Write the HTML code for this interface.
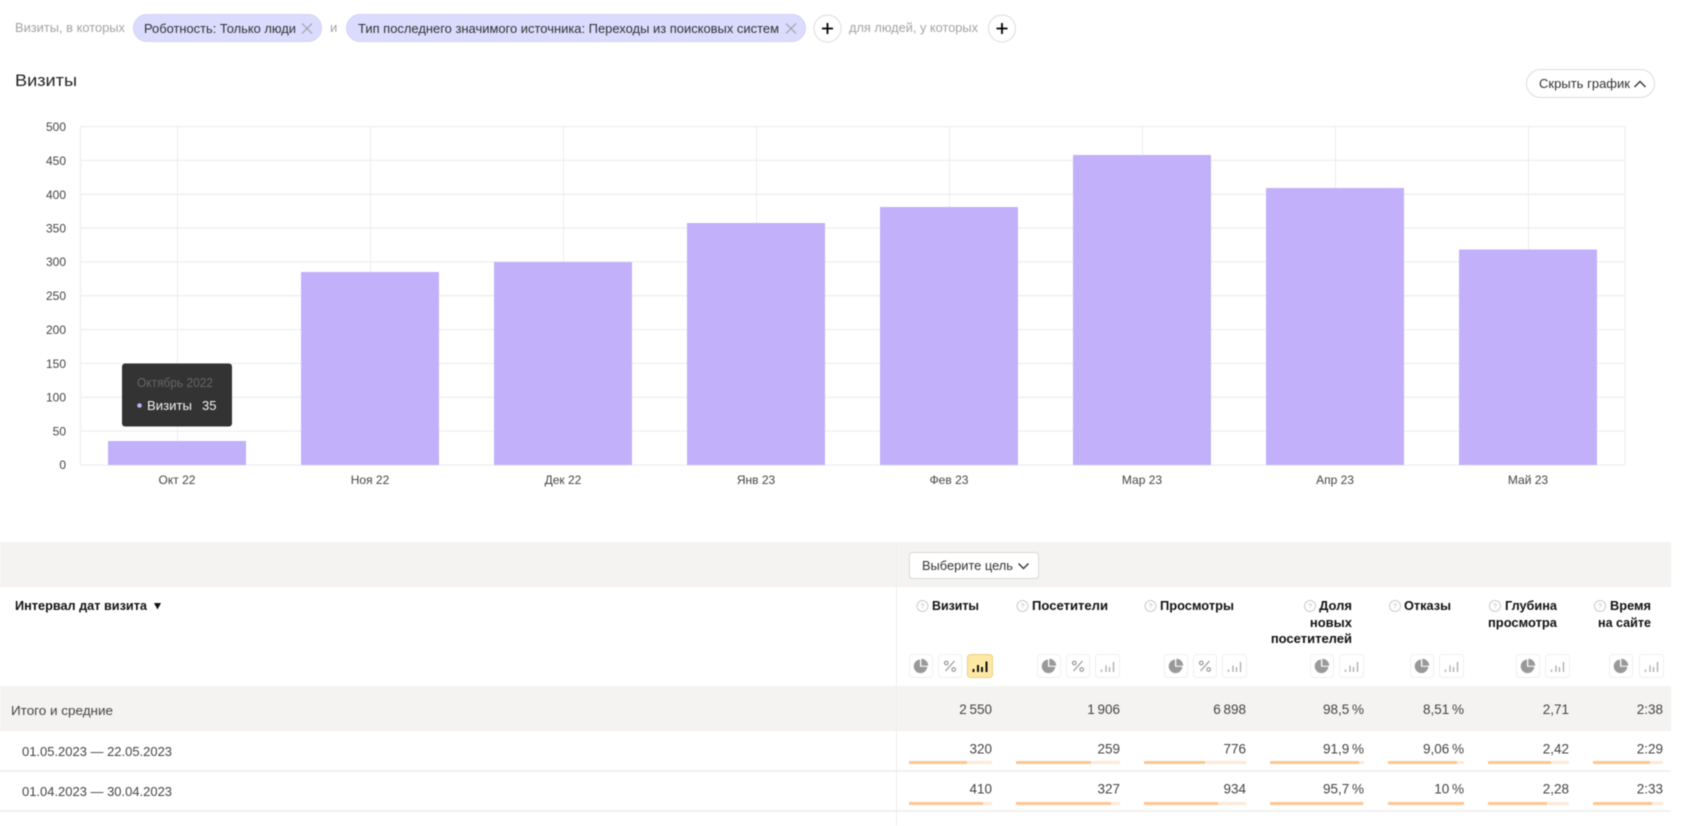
<!DOCTYPE html>
<html lang="ru">
<head>
<meta charset="utf-8">
<title>Визиты</title>
<style>
html,body{margin:0;padding:0;background:#fff;width:1696px;height:826px;overflow:hidden}
svg{display:block;filter:blur(0.4px)}
text{font-family:"Liberation Sans","Noto Sans CJK SC",sans-serif;font-size:13px;fill:#333}
.mut{fill:#a3a3a3}
.ax{font-size:12px;fill:#444}
.x{font-size:12px;fill:#444;text-anchor:middle}
.b{font-weight:bold;fill:#111}
.r{text-anchor:end}
.n{text-anchor:end;font-size:13.5px;fill:#444}
.g{stroke:#efefef;stroke-width:1.3}
.v{stroke:#ececec;stroke-width:1}
.bar{fill:#c2b0fa}
.chip{fill:#dadbfd;stroke:#d2d3f8}
.tr{fill:#fde9d8}
.fl{fill:#fdc592}
</style>
</head>
<body>
<svg width="1696" height="826" viewBox="0 0 1696 826" xmlns="http://www.w3.org/2000/svg">
<defs>
<g id="pie"><rect x="0.5" y="0.5" width="23" height="23" rx="3" fill="#fff" stroke="#f0f0f0"/><path d="M11 5.500a6.800 6.800 0 1 0 7.300 7.300h-7.300z" fill="#999"/><path d="M12.300 4.800v6.900h6.900a6.900 6.900 0 0 0-6.900-6.900z" fill="#999"/></g>
<g id="pct"><rect x="0.5" y="0.5" width="23" height="23" rx="3" fill="#fff" stroke="#f0f0f0"/><path d="M7.500 17l9-10" stroke="#999" stroke-width="1.200" fill="none"/><circle cx="8.300" cy="9" r="1.800" fill="none" stroke="#999" stroke-width="1.200"/><circle cx="15.700" cy="15.500" r="1.800" fill="none" stroke="#999" stroke-width="1.200"/></g>
<g id="bars"><rect x="0.5" y="0.5" width="24" height="23" rx="3" fill="#fff" stroke="#f0f0f0"/><path d="M6.500 15.500v2.500M11 11.500v6.500M14.500 13v5M18.500 8v10" stroke="#aaa" stroke-width="1.300" fill="none"/></g>
<g id="q"><circle cx="0" cy="0" r="5.500" fill="#fff" stroke="#ccc"/><text x="0" y="2.500" text-anchor="middle" style="font-size:7px;fill:#bbb">?</text></g>
</defs>

<!-- Filter row -->
<text class="mut" x="15" y="32" textLength="110" lengthAdjust="spacingAndGlyphs">Визиты, в которых</text>
<rect class="chip" x="133.500" y="14.500" width="188" height="27" rx="13.500"/>
<text x="144" y="33" textLength="152" lengthAdjust="spacingAndGlyphs">Роботность: Только люди</text>
<path d="M302 23.500l10 10M312 23.500l-10 10" stroke="#999" stroke-width="0.900" fill="none"/>
<text class="mut" x="330" y="32">и</text>
<rect class="chip" x="346.500" y="14.500" width="459" height="27" rx="13.500"/>
<text x="358" y="33" textLength="421" lengthAdjust="spacingAndGlyphs">Тип последнего значимого источника: Переходы из поисковых систем</text>
<path d="M786 23.500l10 10M796 23.500l-10 10" stroke="#999" stroke-width="0.900" fill="none"/>
<circle cx="827.500" cy="28.500" r="13.500" fill="#fff" stroke="#dcdcdc"/>
<path d="M827.500 23v11M822 28.500h11" stroke="#000" stroke-width="1.800"/>
<text class="mut" x="849" y="32" textLength="129" lengthAdjust="spacingAndGlyphs">для людей, у которых</text>
<circle cx="1002" cy="28.500" r="13.500" fill="#fff" stroke="#dcdcdc"/>
<path d="M1002 23v11M996.500 28.500h11" stroke="#000" stroke-width="1.800"/>

<!-- Title -->
<text x="15" y="86" style="font-size:17px;fill:#222" textLength="62" lengthAdjust="spacingAndGlyphs">Визиты</text>
<rect x="1526.500" y="69.500" width="128" height="28" rx="14" fill="#fff" stroke="#dcdcdc"/>
<text x="1539" y="88" textLength="91" lengthAdjust="spacingAndGlyphs">Скрыть график</text>
<path d="M1634.500 87l5.500-5.500 5.500 5.500" fill="none" stroke="#333" stroke-width="1.400"/>

<!-- Chart grid -->
<g>
<line class="g" x1="80" x2="1625" y1="126.500" y2="126.500"/>
<line class="g" x1="80" x2="1625" y1="160.400" y2="160.400"/>
<line class="g" x1="80" x2="1625" y1="194.200" y2="194.200"/>
<line class="g" x1="80" x2="1625" y1="228" y2="228"/>
<line class="g" x1="80" x2="1625" y1="261.900" y2="261.900"/>
<line class="g" x1="80" x2="1625" y1="295.700" y2="295.700"/>
<line class="g" x1="80" x2="1625" y1="329.600" y2="329.600"/>
<line class="g" x1="80" x2="1625" y1="363.500" y2="363.500"/>
<line class="g" x1="80" x2="1625" y1="397.300" y2="397.300"/>
<line class="g" x1="80" x2="1625" y1="431.100" y2="431.100"/>
<line class="g" x1="80" x2="1625" y1="465" y2="465"/>
<line class="g" x1="80.500" x2="80.500" y1="126" y2="465"/>
<line class="g" x1="1625" x2="1625" y1="126" y2="465"/>
<line class="v" x1="177.500" x2="177.500" y1="126" y2="465"/>
<line class="v" x1="370.500" x2="370.500" y1="126" y2="465"/>
<line class="v" x1="563.500" x2="563.500" y1="126" y2="465"/>
<line class="v" x1="756.500" x2="756.500" y1="126" y2="465"/>
<line class="v" x1="949.500" x2="949.500" y1="126" y2="465"/>
<line class="v" x1="1142.500" x2="1142.500" y1="126" y2="465"/>
<line class="v" x1="1335.500" x2="1335.500" y1="126" y2="465"/>
<line class="v" x1="1528.500" x2="1528.500" y1="126" y2="465"/>
</g>
<g class="bars">
<rect class="bar" x="108" y="441" width="138" height="24"/>
<rect class="bar" x="301" y="272" width="138" height="193"/>
<rect class="bar" x="494" y="262" width="138" height="203"/>
<rect class="bar" x="687" y="223" width="138" height="242"/>
<rect class="bar" x="880" y="207" width="138" height="258"/>
<rect class="bar" x="1073" y="155" width="138" height="310"/>
<rect class="bar" x="1266" y="188" width="138" height="277"/>
<rect class="bar" x="1459" y="249.500" width="138" height="215.500"/>
</g>
<g>
<text class="ax r" x="66" y="131">500</text>
<text class="ax r" x="66" y="165">450</text>
<text class="ax r" x="66" y="199">400</text>
<text class="ax r" x="66" y="232.500">350</text>
<text class="ax r" x="66" y="266">300</text>
<text class="ax r" x="66" y="300">250</text>
<text class="ax r" x="66" y="334">200</text>
<text class="ax r" x="66" y="368">150</text>
<text class="ax r" x="66" y="401.500">100</text>
<text class="ax r" x="66" y="435.500">50</text>
<text class="ax r" x="66" y="469">0</text>
</g>
<g>
<text class="x" x="177" y="484">Окт 22</text>
<text class="x" x="370" y="484">Ноя 22</text>
<text class="x" x="563" y="484">Дек 22</text>
<text class="x" x="756" y="484">Янв 23</text>
<text class="x" x="949" y="484">Фев 23</text>
<text class="x" x="1142" y="484">Мар 23</text>
<text class="x" x="1335" y="484">Апр 23</text>
<text class="x" x="1528" y="484">Май 23</text>
</g>

<!-- Tooltip -->
<rect x="122" y="363.500" width="110" height="63" rx="3" fill="#333"/>
<text x="137" y="387" style="font-size:12.500px;fill:#666" textLength="76" lengthAdjust="spacingAndGlyphs">Октябрь 2022</text>
<circle cx="139.500" cy="405.500" r="2.300" fill="#c2b0fa"/>
<text x="147" y="410" style="font-size:13px;fill:#f2f2f2" textLength="45" lengthAdjust="spacingAndGlyphs">Визиты</text>
<text x="202" y="410" style="font-size:13px;fill:#f2f2f2">35</text>

<!-- Table -->
<rect x="0" y="542" width="1671" height="45" fill="#f4f3f1"/>
<rect x="0" y="686" width="1671" height="45" fill="#f4f3f1"/>
<rect x="0" y="770" width="1671" height="2" fill="#f2f2f2"/>
<rect x="0" y="810" width="1671" height="2" fill="#f2f2f2"/>
<line x1="896.500" x2="896.500" y1="542" y2="826" stroke="#ececec"/>

<rect x="909.500" y="552.500" width="129" height="26" rx="3" fill="#fff" stroke="#d8d8d8"/>
<text x="922" y="570" textLength="91" lengthAdjust="spacingAndGlyphs">Выберите цель</text>
<path d="M1018.500 563.500l5 5 5-5" fill="none" stroke="#333" stroke-width="1.400"/>

<text class="b" x="15" y="610" textLength="132" lengthAdjust="spacingAndGlyphs">Интервал дат визита</text>
<path d="M154 603h7l-3.500 6.500z" fill="#111"/>

<use href="#q" x="922.500" y="606"/><text class="b" x="932" y="610" textLength="47" lengthAdjust="spacingAndGlyphs">Визиты</text>
<use href="#q" x="1022.500" y="606"/><text class="b" x="1032" y="610" textLength="76" lengthAdjust="spacingAndGlyphs">Посетители</text>
<use href="#q" x="1150.500" y="606"/><text class="b" x="1160" y="610" textLength="74" lengthAdjust="spacingAndGlyphs">Просмотры</text>
<use href="#q" x="1310" y="606"/><text class="b r" x="1352" y="610">Доля</text>
<text class="b r" x="1352" y="627">новых</text>
<text class="b r" x="1352" y="643">посетителей</text>
<use href="#q" x="1395" y="606"/><text class="b" x="1404" y="610" textLength="47" lengthAdjust="spacingAndGlyphs">Отказы</text>
<use href="#q" x="1495" y="606"/><text class="b" x="1505" y="610" textLength="52" lengthAdjust="spacingAndGlyphs">Глубина</text>
<text class="b" x="1488" y="627" textLength="69" lengthAdjust="spacingAndGlyphs">просмотра</text>
<use href="#q" x="1600" y="606"/><text class="b" x="1610" y="610" textLength="41" lengthAdjust="spacingAndGlyphs">Время</text>
<text class="b" x="1598" y="627" textLength="53" lengthAdjust="spacingAndGlyphs">на сайте</text>

<use href="#pie" x="909" y="654"/><use href="#pct" x="938" y="654"/>
<rect x="967.500" y="654.500" width="25" height="23" rx="3" fill="#fde9a4" stroke="#e8d08a"/>
<path d="M973.500 669v3M978 665v7M982 667v5M986.500 661.500v10.500" stroke="#111" stroke-width="2" fill="none"/>
<use href="#pie" x="1037" y="654"/><use href="#pct" x="1066" y="654"/><use href="#bars" x="1095" y="654"/>
<use href="#pie" x="1164" y="654"/><use href="#pct" x="1193" y="654"/><use href="#bars" x="1222" y="654"/>
<use href="#pie" x="1310" y="654"/><use href="#bars" x="1339" y="654"/>
<use href="#pie" x="1410" y="654"/><use href="#bars" x="1439" y="654"/>
<use href="#pie" x="1516" y="654"/><use href="#bars" x="1545" y="654"/>
<use href="#pie" x="1609" y="654"/><use href="#bars" x="1639" y="654"/>

<text x="11" y="715" textLength="102" lengthAdjust="spacingAndGlyphs" style="fill:#444">Итого и средние</text>
<text x="22" y="756" textLength="150" lengthAdjust="spacingAndGlyphs" style="fill:#444">01.05.2023 — 22.05.2023</text>
<text x="22" y="796" textLength="150" lengthAdjust="spacingAndGlyphs" style="fill:#444">01.04.2023 — 30.04.2023</text>

<text class="n" x="992" y="714">2&#8201;550</text>
<text class="n" x="1120" y="714">1&#8201;906</text>
<text class="n" x="1246" y="714">6&#8201;898</text>
<text class="n" x="1364" y="714">98,5&#8201;%</text>
<text class="n" x="1464" y="714">8,51&#8201;%</text>
<text class="n" x="1569" y="714">2,71</text>
<text class="n" x="1663" y="714">2:38</text>

<text class="n" x="992" y="753.500">320</text>
<text class="n" x="1120" y="753.500">259</text>
<text class="n" x="1246" y="753.500">776</text>
<text class="n" x="1364" y="753.500">91,9&#8201;%</text>
<text class="n" x="1464" y="753.500">9,06&#8201;%</text>
<text class="n" x="1569" y="753.500">2,42</text>
<text class="n" x="1663" y="753.500">2:29</text>

<text class="n" x="992" y="793.500">410</text>
<text class="n" x="1120" y="793.500">327</text>
<text class="n" x="1246" y="793.500">934</text>
<text class="n" x="1364" y="793.500">95,7&#8201;%</text>
<text class="n" x="1464" y="793.500">10&#8201;%</text>
<text class="n" x="1569" y="793.500">2,28</text>
<text class="n" x="1663" y="793.500">2:33</text>

<rect class="tr" x="909" y="761" width="83" height="3"/><rect class="fl" x="909" y="761" width="58" height="3"/>
<rect class="tr" x="1016" y="761" width="104" height="3"/><rect class="fl" x="1016" y="761" width="75" height="3"/>
<rect class="tr" x="1144" y="761" width="102" height="3"/><rect class="fl" x="1144" y="761" width="61" height="3"/>
<rect class="tr" x="1270" y="761" width="94" height="3"/><rect class="fl" x="1270" y="761" width="89" height="3"/>
<rect class="tr" x="1388" y="761" width="76" height="3"/><rect class="fl" x="1388" y="761" width="69" height="3"/>
<rect class="tr" x="1488" y="761" width="81" height="3"/><rect class="fl" x="1488" y="761" width="63" height="3"/>
<rect class="tr" x="1593" y="761" width="70" height="3"/><rect class="fl" x="1593" y="761" width="57" height="3"/>

<rect class="tr" x="909" y="802" width="83" height="3"/><rect class="fl" x="909" y="802" width="74" height="3"/>
<rect class="tr" x="1016" y="802" width="104" height="3"/><rect class="fl" x="1016" y="802" width="95" height="3"/>
<rect class="tr" x="1144" y="802" width="102" height="3"/><rect class="fl" x="1144" y="802" width="74" height="3"/>
<rect class="tr" x="1270" y="802" width="94" height="3"/><rect class="fl" x="1270" y="802" width="93" height="3"/>
<rect class="tr" x="1388" y="802" width="76" height="3"/><rect class="fl" x="1388" y="802" width="76" height="3"/>
<rect class="tr" x="1488" y="802" width="81" height="3"/><rect class="fl" x="1488" y="802" width="59" height="3"/>
<rect class="tr" x="1593" y="802" width="70" height="3"/><rect class="fl" x="1593" y="802" width="59" height="3"/>
</svg>
</body>
</html>
